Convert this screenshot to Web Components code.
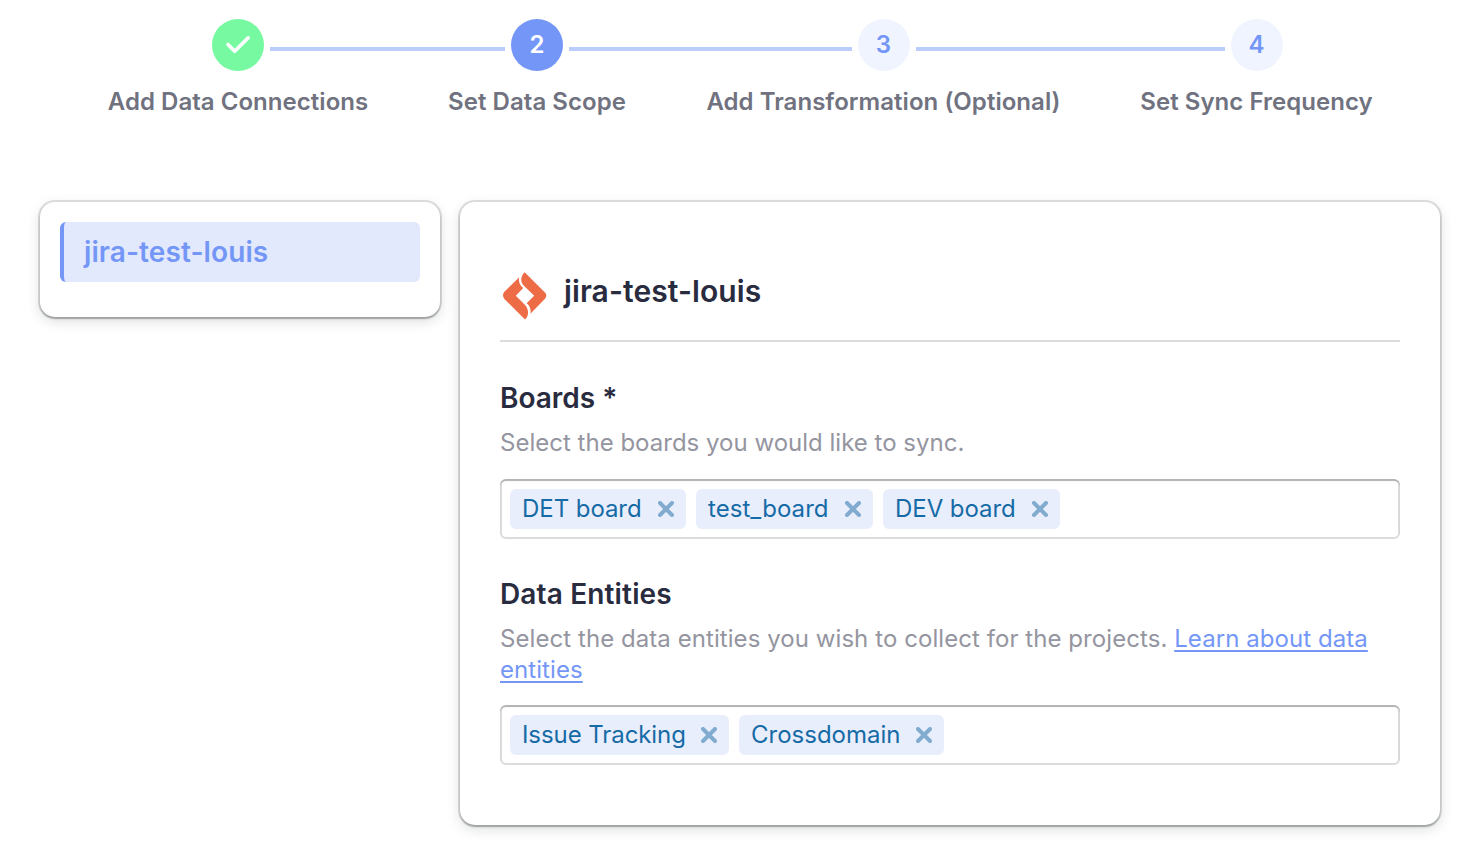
<!DOCTYPE html>
<html lang="en">
<head>
<meta charset="utf-8">
<title>Set Data Scope</title>
<style>
html,body{margin:0;height:856px;overflow:hidden;background:#fff;font-family:Inter,"Liberation Sans",sans-serif}
</style>
</head>
<body>
<blueprint-page></blueprint-page>
<script>
function define(name, html) {
  const template = document.createElement('template');
  template.innerHTML = html;
  customElements.define(name, class extends HTMLElement {
    constructor() {
      super();
      this.attachShadow({mode: 'open'}).append(template.content.cloneNode(true));
    }
  });
}

define('flow-step', `
<style>
:host{display:flex;flex-direction:column;flex:none;color:#70727f}
.track{display:flex;align-items:center;height:52px}
.line{flex:1;height:4px;margin-top:8px;background:#bbcdfd}
.before{margin-right:6px}.after{margin-left:6px}
:host([first]) .before,:host([last]) .after{background:none}
.dot{width:52px;height:52px;border-radius:50%;flex:none;display:flex;align-items:center;justify-content:center;background:#f0f4fe;color:#7497f7;font:600 24px/52px Inter,sans-serif}
:host([active]) .dot{background:#7497f7;color:#fff}
:host([done]) .dot{background:#76f9a0;color:#fff}
.label{margin-top:16px;font-weight:600;font-size:24px;line-height:30px;text-align:center;white-space:nowrap;letter-spacing:.04px}
</style>
<div class="track"><span class="line before"></span><span class="dot"><slot name="mark"></slot></span><span class="line after"></span></div>
<div class="label"><slot></slot></div>`);

define('surface-card', `
<style>
:host{display:block;box-sizing:border-box;border-radius:15px;background:#fff;box-shadow:0 0 0 2px rgba(17,20,24,.13),0 2px 2px rgba(17,20,24,.24),0 4px 14px rgba(17,20,24,.14)}
</style><slot></slot>`);

define('connection-item', `
<style>
:host{display:block;box-sizing:border-box;height:60px;border-left:4px solid #7497f7;border-radius:6px;background:#e3e9fd;color:#7497f7;font-size:28px;font-weight:600;line-height:60px;padding-left:20px;letter-spacing:.1px}
</style><slot></slot>`);

define('jira-logo', `
<style>:host{display:block;width:44px;height:48px}svg{display:block}</style>
<svg width="44" height="48" viewBox="0 0 44 48" fill="#ed6b45">
<path d="M16.2 5.3 1.4 19.8Q-.9 22.2.6 25.5L1.4 27 22 47.6C27 43 25 36 22.3 33.2L12.8 23.8 20.2 16.1C16.5 13 15.4 9.2 16.2 5.3Z"/>
<path d="M21.6.2 42.2 20.8Q44.4 23.5 42.2 26.5L27.4 41.7C28.2 37.5 26.8 33.6 23.7 31.3L31.2 23.8 22.2 15.1C16.8 10.5 17.2 4.6 21.6.2Z"/>
</svg>`);

define('form-field', `
<style>
:host{display:block}
h3{margin:0;color:#292b3f;font-size:28px;font-weight:600;line-height:36px;letter-spacing:var(--title-ls,0)}
p{margin:11px 0 0;color:#94959f;font-size:24px;line-height:31px;letter-spacing:var(--hint-ls,.01px)}
::slotted(a){color:#7497f7;text-decoration:underline;text-decoration-thickness:2px;text-underline-offset:3px}
.tags{margin-top:var(--tags-gap,20px)}
</style>
<h3><slot name="title"></slot></h3><p><slot name="hint"></slot><slot name="link"></slot></p><div class="tags"><slot></slot></div>`);

define('tag-input', `
<style>
:host{display:flex;gap:10px;box-sizing:border-box;height:60px;padding:10px;border-radius:6px;background:#fff;box-shadow:inset 0 2px 1px rgba(17,20,24,.2),inset 0 0 0 2px #dcdcdd}
</style><slot></slot>`);

define('tag-chip', `
<style>
:host{display:flex;box-sizing:border-box;flex:none;height:40px;padding:0 12px;border-radius:6px;background:#e9eefd;color:#166ba6;font-size:24px;white-space:nowrap;align-items:center;justify-content:space-between}
span{line-height:40px;height:40px}
svg{display:block;flex:none}
</style>
<span><slot></slot></span>
<svg width="16" height="16" viewBox="0 0 16 16" fill="none" stroke="#82abd0" stroke-width="4" stroke-linecap="round"><path d="M2 2 14 14M14 2 2 14"/></svg>`);

define('blueprint-page', `
<style>
:host{display:block;height:856px}
.steps{display:flex;padding:19px 0 0 68px}
.s1{width:340px}.s2{width:258px}.s3{width:435px}.s4{width:311px}
.body{display:flex;align-items:flex-start;gap:20px;padding:85px 36px 0 40px}
.side{width:400px;height:115px;padding:20px}
.main{width:980px;height:623px;padding:70px 40px 0}
.head{display:flex;height:70px;border-bottom:2px solid #dbdcdd;padding-left:2.6px;box-sizing:border-box}
.head h2{margin:-1px 0 0 17.4px;color:#292b3f;font-weight:600;font-size:30px;line-height:40px;letter-spacing:.1px}
.boards{margin-top:38px;--tags-gap:21px}.entities{margin-top:37px;--title-ls:.15px;--hint-ls:.065px}
</style>
<div class="steps">
<flow-step class="s1" first done><svg slot="mark" width="26" height="20" viewBox="0 0 26 20" fill="none" stroke="#fff" stroke-width="3.6" stroke-linecap="round" stroke-linejoin="round"><path d="M3 9.5 9.7 16.3 23.2 2.8"/></svg>Add Data Connections</flow-step>
<flow-step class="s2" active><span slot="mark">2</span>Set Data Scope</flow-step>
<flow-step class="s3"><span slot="mark">3</span>Add Transformation (Optional)</flow-step>
<flow-step class="s4" last><span slot="mark">4</span>Set Sync Frequency</flow-step>
</div>
<div class="body">
<surface-card class="side"><connection-item>jira-test-louis</connection-item></surface-card>
<surface-card class="main">
<div class="head"><jira-logo></jira-logo><h2>jira-test-louis</h2></div>
<form-field class="boards"><span slot="title">Boards *</span><span slot="hint">Select the boards you would like to sync.</span>
<tag-input><tag-chip style="width:176px;letter-spacing:-.06px">DET board</tag-chip><tag-chip style="width:177px;letter-spacing:.06px">test_board</tag-chip><tag-chip style="width:177px;letter-spacing:-.06px">DEV board</tag-chip></tag-input></form-field>
<form-field class="entities"><span slot="title">Data Entities</span><span slot="hint">Select the data entities you wish to collect for the projects. </span><a slot="link" href="#">Learn about data entities</a>
<tag-input><tag-chip style="width:219px;letter-spacing:-.08px">Issue Tracking</tag-chip><tag-chip style="width:205px">Crossdomain</tag-chip></tag-input></form-field>
</surface-card>
</div>`);
</script>
</body>
</html>
